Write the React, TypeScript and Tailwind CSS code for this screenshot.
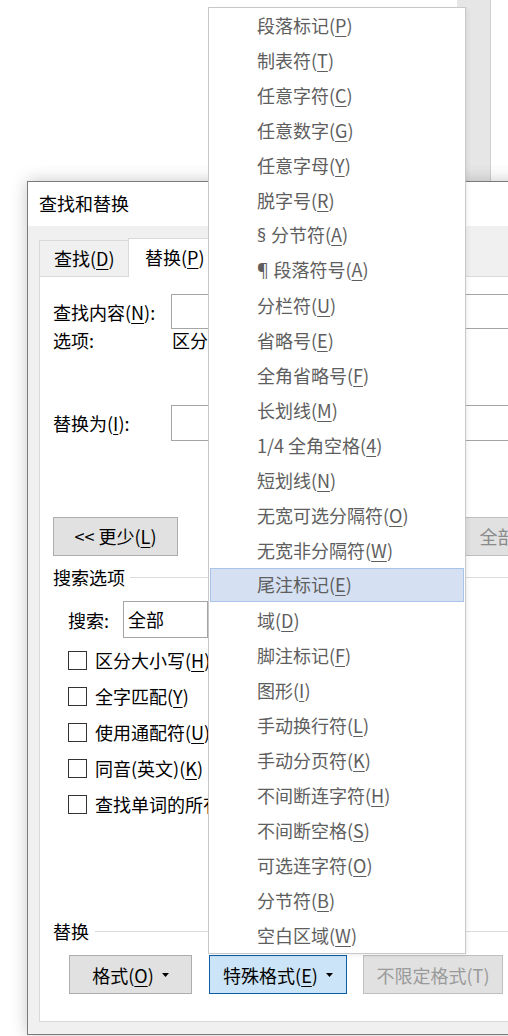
import React from 'react';

type Item = { label: string; k: string; sym?: string };

const menuItems: Item[] = [
  { label: '段落标记', k: 'P' },
  { label: '制表符', k: 'T' },
  { label: '任意字符', k: 'C' },
  { label: '任意数字', k: 'G' },
  { label: '任意字母', k: 'Y' },
  { label: '脱字号', k: 'R' },
  { label: '分节符', k: 'A', sym: '§' },
  { label: '段落符号', k: 'A', sym: '¶' },
  { label: '分栏符', k: 'U' },
  { label: '省略号', k: 'E' },
  { label: '全角省略号', k: 'F' },
  { label: '长划线', k: 'M' },
  { label: '1/4 全角空格', k: '4' },
  { label: '短划线', k: 'N' },
  { label: '无宽可选分隔符', k: 'O' },
  { label: '无宽非分隔符', k: 'W' },
  { label: '尾注标记', k: 'E' },
  { label: '域', k: 'D' },
  { label: '脚注标记', k: 'F' },
  { label: '图形', k: 'I' },
  { label: '手动换行符', k: 'L' },
  { label: '手动分页符', k: 'K' },
  { label: '不间断连字符', k: 'H' },
  { label: '不间断空格', k: 'S' },
  { label: '可选连字符', k: 'O' },
  { label: '分节符', k: 'B' },
  { label: '空白区域', k: 'W' },
];

const checks: Item[] = [
  { label: '区分大小写', k: 'H' },
  { label: '全字匹配', k: 'Y' },
  { label: '使用通配符', k: 'U' },
  { label: '同音(英文)', k: 'K' },
  { label: '查找单词的所有形式(英文)', k: 'W' },
];

function Mn({ label, k, suffix = '', sym }: { label: string; k: string; suffix?: string; sym?: string }) {
  return (
    <span className="whitespace-nowrap">
      {sym && <span className="font-['Noto_Sans',sans-serif]">{sym} </span>}
      {label}(<span className="underline decoration-1 underline-offset-[3px]">{k}</span>){suffix}
    </span>
  );
}

function Caret() {
  return (
    <svg width="7" height="4" viewBox="0 0 7 4" className="ml-[8px]">
      <polygon points="0,0 7,0 3.5,4" fill="currentColor" />
    </svg>
  );
}

function SpecialMenu() {
  return (
    <div className="absolute left-[208px] top-[7px] z-20 w-[258px] border border-[#c8c8c8] bg-white text-[#5e5e5e] shadow-[2px_2px_4px_rgba(0,0,0,0.06)]">
      {menuItems.map((it, i) =>
        i === 16 ? (
          <div
            key={i}
            className="mx-px mb-px flex h-[34px] items-center border border-[#a9c4e9] bg-[#d5e1f2] pb-[2px] pl-[46px]"
          >
            <Mn label={it.label} k={it.k} />
          </div>
        ) : (
          <div key={i} className="flex h-[35px] items-center pb-[2px] pl-[48px]">
            <Mn label={it.label} k={it.k} sym={it.sym} />
          </div>
        )
      )}
    </div>
  );
}

function Dialog() {
  return (
    <div className="absolute left-[27px] top-[181px] z-10 flex h-[854px] w-[540px] flex-col border border-[#7a7a7a] bg-[#f0f0f0] shadow-[0_0_16px_rgba(0,0,0,0.22)]">
      {/* title bar */}
      <div className="flex h-[44px] shrink-0 items-center bg-white pb-[3px] pl-[11px]">查找和替换</div>

      <div className="flex flex-1 flex-col pb-[12px] pl-[11px] pt-[12px]">
        {/* tabs */}
        <div className="relative z-10 -mb-px flex items-end">
          <div className="mb-px flex h-[36px] w-[89px] items-center border-l border-t border-[#d9d9d9] bg-[#f0f0f0] pb-[2px] pl-[14px]">
            <Mn label="查找" k="D" />
          </div>
          <div className="flex h-[39px] w-[96px] items-center border-x border-t border-[#d9d9d9] bg-white pb-[2px] pl-[16px]">
            <Mn label="替换" k="P" />
          </div>
        </div>

        {/* panel */}
        <div className="flex flex-1 flex-col border border-[#d9d9d9] bg-white pl-[13px] pt-[17px]">
          <div className="flex h-[35px] items-center">
            <div className="w-[118px] shrink-0">
              <Mn label="查找内容" k="N" suffix=":" />
            </div>
            <div className="h-full w-[400px] shrink-0 border border-[#a5a5a5] bg-white" />
          </div>
          <div className="flex h-[22px] items-center">
            <div className="w-[118px] shrink-0">选项:</div>
            <div className="whitespace-nowrap pl-px">区分全/半角</div>
          </div>

          <div className="mt-[54px] flex h-[36px] items-center">
            <div className="w-[118px] shrink-0">
              <Mn label="替换为" k="I" suffix=":" />
            </div>
            <div className="h-full w-[400px] shrink-0 border border-[#a5a5a5] bg-white" />
          </div>

          <div className="mt-[76px] flex h-[39px]">
            <button className="flex w-[125px] shrink-0 items-center justify-center border border-[#adadad] bg-[#e1e1e1] pb-[2px]">
              <span className="whitespace-nowrap">
                {'<< '}
                <Mn label="更少" k="L" />
              </span>
            </button>
            <button className="ml-[287px] flex w-[124px] shrink-0 items-center justify-center border border-[#bfbfbf] bg-[#e1e1e1] pb-[2px] text-[#8a8a8a]">
              <Mn label="全部替换" k="A" />
            </button>
          </div>

          {/* search options */}
          <div className="mt-[9px] flex h-[24px] items-center">
            <span>搜索选项</span>
            <div className="ml-[5px] h-px flex-1 bg-[#dcdcdc]" />
          </div>

          <div className="mt-[12px] flex h-[37px] items-center pl-[15px]">
            <div className="w-[55px] shrink-0">搜索:</div>
            <div className="flex h-full w-[200px] shrink-0 border border-[#a5a5a5] bg-white">
              <div className="flex w-[83px] items-center pb-[2px] pl-[4px]">全部</div>
              <div className="flex-1 border-l border-[#a5a5a5] bg-[#f0f0f0]" />
            </div>
          </div>

          <div className="mt-[4px] flex flex-col">
            {checks.map((c) => (
              <div key={c.k} className="flex h-[36px] items-center gap-[8px] pl-[15px]">
                <div className="h-[19px] w-[19px] shrink-0 border border-[#333333] bg-white" />
                <Mn label={c.label} k={c.k} />
              </div>
            ))}
          </div>

          {/* replace group */}
          <div className="mt-[97px] flex h-[24px] items-center">
            <span>替换</span>
            <div className="ml-[6px] h-px flex-1 bg-[#dcdcdc]" />
          </div>

          <div className="mt-[12px] flex h-[39px] pl-[16px]">
            <button className="flex w-[123px] shrink-0 items-center justify-center border border-[#adadad] bg-[#e1e1e1]">
              <Mn label="格式" k="O" />
              <Caret />
            </button>
            <button className="ml-[17px] flex w-[138px] shrink-0 items-center justify-center border border-[#0a5ea8] bg-[#cce4f7]">
              <Mn label="特殊格式" k="E" />
              <Caret />
            </button>
            <button className="ml-[16px] flex w-[140px] shrink-0 items-center justify-center border border-[#bfbfbf] bg-[#e1e1e1] text-[#9a9a9a]">
              <span className="whitespace-nowrap">不限定格式(T)</span>
            </button>
          </div>
        </div>
      </div>
    </div>
  );
}

export default function App() {
  return (
    <div className="relative h-[1036px] w-[508px] overflow-hidden bg-white font-['Noto_Sans_CJK_SC',sans-serif] text-[18px] leading-[24px] text-black">
      {/* edge of the window behind the dialog */}
      <div className="absolute left-[457px] top-0 h-[181px] w-[34px] border-r border-[#cfcfcf] bg-[#e6e6e6]" />
      <Dialog />
      <SpecialMenu />
    </div>
  );
}
